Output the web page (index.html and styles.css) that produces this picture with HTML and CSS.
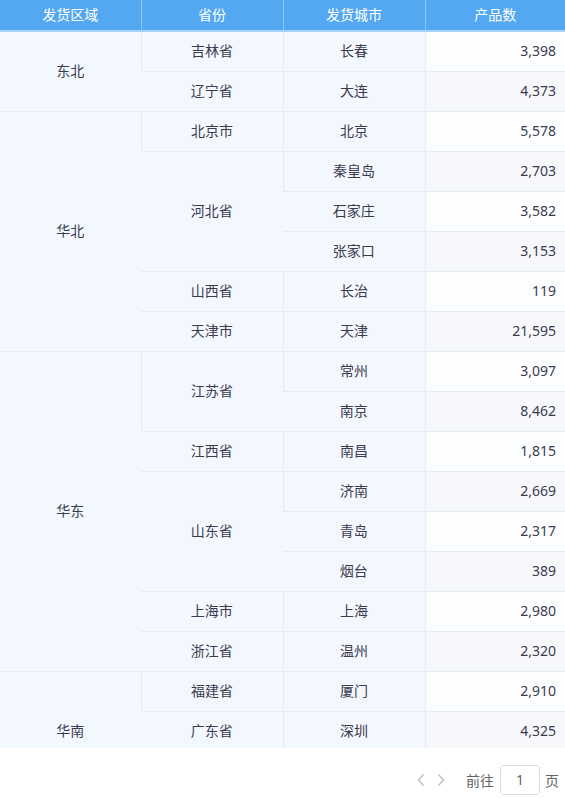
FILE: index.html
```html
<!DOCTYPE html>
<html lang="zh">
<head>
<meta charset="utf-8">
<link rel="stylesheet" href="styles.css">
</head>
<body>
<div class="table-wrap">
<table class="grid">
<colgroup><col class="c1"><col class="c2"><col class="c3"><col class="c4"></colgroup>
<thead>
<tr><th>发货区域</th><th>省份</th><th>发货城市</th><th>产品数</th></tr>
</thead>
<tbody>
<tr class="odd"><td rowspan="2">东北</td><td>吉林省</td><td>长春</td><td class="num">3,398</td></tr>
<tr class="even"><td>辽宁省</td><td>大连</td><td class="num">4,373</td></tr>
<tr class="odd"><td rowspan="6">华北</td><td>北京市</td><td>北京</td><td class="num">5,578</td></tr>
<tr class="even"><td rowspan="3">河北省</td><td>秦皇岛</td><td class="num">2,703</td></tr>
<tr class="odd"><td>石家庄</td><td class="num">3,582</td></tr>
<tr class="even"><td>张家口</td><td class="num">3,153</td></tr>
<tr class="odd"><td>山西省</td><td>长治</td><td class="num">119</td></tr>
<tr class="even"><td>天津市</td><td>天津</td><td class="num">21,595</td></tr>
<tr class="odd"><td rowspan="8">华东</td><td rowspan="2">江苏省</td><td>常州</td><td class="num">3,097</td></tr>
<tr class="even"><td>南京</td><td class="num">8,462</td></tr>
<tr class="odd"><td>江西省</td><td>南昌</td><td class="num">1,815</td></tr>
<tr class="even"><td rowspan="3">山东省</td><td>济南</td><td class="num">2,669</td></tr>
<tr class="odd"><td>青岛</td><td class="num">2,317</td></tr>
<tr class="even"><td>烟台</td><td class="num">389</td></tr>
<tr class="odd"><td>上海市</td><td>上海</td><td class="num">2,980</td></tr>
<tr class="even"><td>浙江省</td><td>温州</td><td class="num">2,320</td></tr>
<tr class="odd"><td rowspan="3">华南</td><td>福建省</td><td>厦门</td><td class="num">2,910</td></tr>
<tr class="even"><td>广东省</td><td>深圳</td><td class="num">4,325</td></tr>
<tr class="odd"><td></td><td></td><td class="num"></td></tr>
</tbody>
</table>
</div>
<div class="pager">
<span class="arrow"><svg width="10" height="14" viewBox="0 0 10 14"><path d="M7.5 1.5 L2.5 7 L7.5 12.5" fill="none" stroke="#c0c4cc" stroke-width="1.6"/></svg></span>
<span class="arrow"><svg width="10" height="14" viewBox="0 0 10 14"><path d="M2.5 1.5 L7.5 7 L2.5 12.5" fill="none" stroke="#c0c4cc" stroke-width="1.6"/></svg></span>
<span class="label">前往</span>
<span class="page-input">1</span>
<span class="label">页</span>
</div>
</body>
</html>
```
FILE: styles.css
```css
html, body {
  margin: 0;
  padding: 0;
  background: #ffffff;
  font-family: "Noto Sans", "Noto Sans CJK SC", sans-serif;
  font-size: 14px;
  color: #3b3b4f;
}
.table-wrap {
  height: 748px;
  overflow: hidden;
}
.grid {
  width: 565px;
  table-layout: fixed;
  border-collapse: collapse;
}
.c1 { width: 141px; }
.c2 { width: 142px; }
.c3 { width: 142px; }
.c4 { width: 140px; }
.grid th {
  height: 29px;
  padding: 0 0 1px;
  background: #54a8f1;
  color: #ffffff;
  font-weight: normal;
  text-align: center;
  border-left: 1px solid #8ec6f6;
  border-bottom: 2px solid #a6d2f8;
  line-height: 20px;
}
.grid th:first-child { border-left: none; }
.grid td {
  height: 38px;
  padding: 0 8px 1px;
  text-align: center;
  background: #f3f7fe;
  border-left: 1px solid #e6ecf7;
  border-bottom: 1px solid #e6ecf7;
  line-height: 20px;
}
.grid tr > td:first-child { border-left: none; }
.grid td.num {
  text-align: right;
  padding-right: 9px;
}
.grid tr.odd td.num { background: #fcfdff; }
.grid tr.even td.num { background: #f7f8fc; }
.pager {
  display: flex;
  justify-content: flex-end;
  align-items: center;
  height: 30px;
  margin-top: 17px;
  padding-right: 6px;
  color: #606266;
}
.arrow {
  display: flex;
  align-items: center;
  justify-content: center;
  width: 20px;
  height: 30px;
}
.label { margin: 0 6px 0 15px; }
.label:last-child { margin: 0 0 0 5px; }
.page-input {
  box-sizing: border-box;
  width: 40px;
  height: 30px;
  border: 1px solid #dcdfe6;
  border-radius: 4px;
  text-align: center;
  line-height: 28px;
  color: #606266;
}
```
